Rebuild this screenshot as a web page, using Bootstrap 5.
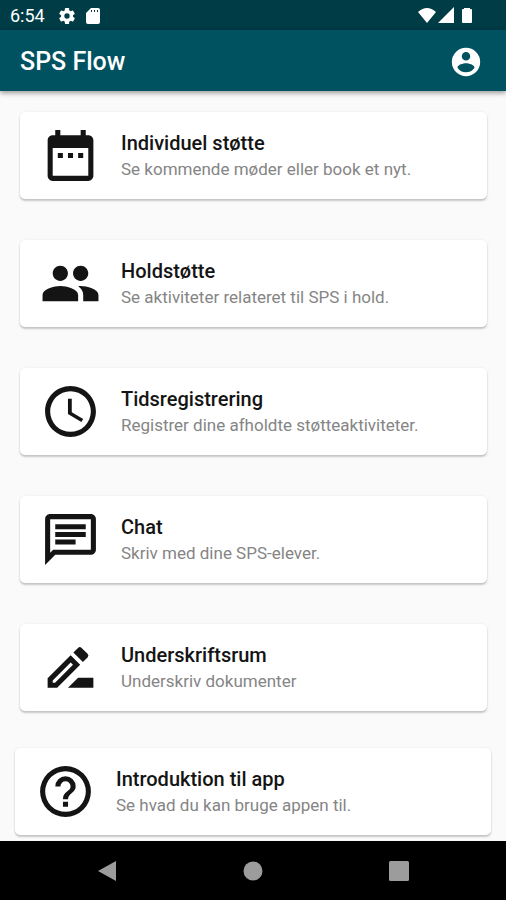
<!DOCTYPE html>
<html lang="da">
<head>
<meta charset="utf-8">
<meta name="viewport" content="width=device-width, initial-scale=1">
<title>SPS Flow</title>
<link href="https://cdn.jsdelivr.net/npm/bootstrap@5.3.0/dist/css/bootstrap.min.css" rel="stylesheet">
<style>
body { font-family: Roboto, "Liberation Sans", sans-serif; background: #fafafa; color: #141414; }
svg { display: block; fill: currentColor; flex: none; }
.status-bar { background: #003c46; height: 30px; padding: 2px 32px 0 10px; font-size: 18px; line-height: 28px; }
.app-bar { background: #005260; height: 61px; padding: 2px 20px 0; box-shadow: 0 2px 5px rgba(0,0,0,.4); }
.app-title { font-size: 25px; line-height: 32px; font-weight: 500; }
.menu-list { padding: 21px 19px 0 20px; gap: 41px; }
.menu-card { min-height: 87px; padding: 0 20px; gap: 20px; background: #fff; border-radius: 5px; box-shadow: 0 2px 2px rgba(0,0,0,.2), 0 0 3px rgba(0,0,0,.07); }
.menu-title { font-size: 20px; line-height: 26px; font-weight: 500; }
.menu-text { font-size: 17px; line-height: 26px; color: #858585; }
.intro-area { padding: 37px 15px 6px; }
.system-nav { background: #000; color: #9c9c9c; height: 59px; gap: 98px; }
.system-nav .btn { width: 48px; height: 48px; }
</style>
</head>
<body class="d-flex flex-column min-vh-100">
<header class="text-white">
  <div class="status-bar d-flex align-items-center">
    <span>6:54</span>
    <svg class="ms-2" width="28" height="20" viewBox="-2 0 28 24" aria-hidden="true"><path d="M19.14 12.94c.04-.3.06-.61.06-.94s-.02-.64-.07-.94l2.03-1.58a.49.49 0 0 0 .12-.61l-1.92-3.32a.49.49 0 0 0-.59-.22l-2.39.96a7 7 0 0 0-1.62-.94l-.36-2.54A.48.48 0 0 0 13.920 2.400h-3.840a.48.48 0 0 0-.47.41l-.36 2.540a7 7 0 0 0-1.620.940l-2.390-.960a.48.48 0 0 0-.59.22L2.740 8.870a.48.48 0 0 0 .12.610l2.030 1.580a7 7 0 0 0 0 1.880l-2.030 1.580a.49.49 0 0 0-.12.610l1.920 3.320c.12.22.37.29.59.22l2.390-.960c.5.38 1.030.7 1.620.94l.36 2.540c.05.24.24.41.48.41h3.840c.24 0 .44-.17.47-.41l.36-2.540a7 7 0 0 0 1.620-.94l2.390.96c.22.08.47 0 .59-.22l1.920-3.320a.48.48 0 0 0-.12-.610zM12 15.200A3.200 3.200 0 1 1 12 8.800a3.200 3.200 0 0 1 0 6.400z"/></svg>
    <svg width="26" height="20" viewBox="0 0 26 20" aria-hidden="true"><path fill-rule="evenodd" d="M10 2h7q2 0 2 2v12q0 2-2 2H7q-2 0-2-2V7zM10 4v2h1V4zm3 0v2h1V4zm3 0v2h1V4z"/></svg>
    <svg class="ms-auto" width="56" height="20" viewBox="0 0 56 20" aria-hidden="true"><path d="M0 6Q9-2 18 6L9 17zM20 17 36 1v16zM46 2h6v1h1q1 0 1 1v12q0 1-1 1h-8q-1 0-1-1V4q0-1 1-1h1z"/></svg>
  </div>
  <div class="app-bar d-flex align-items-center justify-content-between">
    <h1 class="app-title m-0">SPS Flow</h1>
    <button type="button" class="btn p-0 border-0 text-white" aria-label="Profil">
      <svg width="40" height="34" viewBox="0 0 24 24" aria-hidden="true"><path d="M12 2a10 10 0 1 0 0 20 10 10 0 0 0 0-20zm0 3a3 3 0 1 1 0 6 3 3 0 0 1 0-6zm0 14.200a7.200 7.200 0 0 1-6-3.220c.03-1.990 4-3.080 6-3.080s5.970 1.090 6 3.080a7.200 7.200 0 0 1-6 3.220z"/></svg>
    </button>
  </div>
</header>
<main class="flex-grow-1">
  <nav class="menu-list d-flex flex-column" aria-label="Menu">
    <a href="#individuel" class="menu-card d-flex align-items-center text-reset text-decoration-none">
      <svg width="61" height="61" viewBox="0 0 24 24" aria-hidden="true"><path d="M9 11H7v2h2v-2zm4 0h-2v2h2v-2zm4 0h-2v2h2v-2zm2-7h-1V2h-2v2H8V2H6v2H5c-1.110 0-1.990.9-1.990 2L3 20c0 1.100.89 2 2 2h14c1.100 0 2-.9 2-2V6c0-1.100-.9-2-2-2zm0 16H5V9h14v11z"/></svg>
      <span><span class="menu-title d-block">Individuel støtte</span><span class="menu-text d-block">Se kommende møder eller book et nyt.</span></span>
    </a>
    <a href="#hold" class="menu-card d-flex align-items-center text-reset text-decoration-none">
      <svg width="61" height="61" viewBox="0 0 24 24" aria-hidden="true"><path d="M16 11c1.660 0 2.990-1.340 2.990-3S17.660 5 16 5s-3 1.340-3 3 1.340 3 3 3zm-8 0c1.660 0 2.990-1.340 2.990-3S9.660 5 8 5 5 6.340 5 8s1.340 3 3 3zm0 2c-2.330 0-7 1.170-7 3.500V19h14v-2.500c0-2.330-4.670-3.500-7-3.500zm8 0c-.29 0-.62.02-.97.05 1.160.84 1.970 1.970 1.970 3.450V19h6v-2.500c0-2.330-4.670-3.500-7-3.500z"/></svg>
      <span><span class="menu-title d-block">Holdstøtte</span><span class="menu-text d-block">Se aktiviteter relateret til SPS i hold.</span></span>
    </a>
    <a href="#tid" class="menu-card d-flex align-items-center text-reset text-decoration-none">
      <svg width="61" height="61" viewBox="0 0 24 24" aria-hidden="true"><path d="M11.990 2C6.470 2 2 6.480 2 12s4.470 10 9.990 10C17.520 22 22 17.520 22 12S17.520 2 11.990 2zM12 20a8 8 0 1 1 0-16 8 8 0 0 1 0 16zm.5-13H11v6l5.250 3.150.75-1.230-4.500-2.670z"/></svg>
      <span><span class="menu-title d-block">Tidsregistrering</span><span class="menu-text d-block">Registrer dine afholdte støtteaktiviteter.</span></span>
    </a>
    <a href="#chat" class="menu-card d-flex align-items-center text-reset text-decoration-none">
      <svg width="61" height="61" viewBox="0 0 24 24" aria-hidden="true"><path d="M4 4h16v12H5.170L4 17.170V4m0-2c-1.100 0-1.990.9-1.990 2L2 22l4-4h14c1.100 0 2-.9 2-2V4c0-1.100-.9-2-2-2H4zm2 10h8v2H6v-2zm0-3h12v2H6V9zm0-3h12v2H6V6z"/></svg>
      <span><span class="menu-title d-block">Chat</span><span class="menu-text d-block">Skriv med dine SPS-elever.</span></span>
    </a>
    <a href="#underskrift" class="menu-card d-flex align-items-center text-reset text-decoration-none">
      <svg width="61" height="61" viewBox="0 0 24 24" aria-hidden="true"><path d="M15 16l-4 4h10v-4zM12.060 7.190L3 16.250V20h3.750l9.060-9.060zM5.920 18H5v-.92l7.060-7.060.92.92zM18.710 8.040a1 1 0 0 0 0-1.410l-2.340-2.340a1 1 0 0 0-1.410 0l-1.830 1.830 3.750 3.750z"/></svg>
      <span><span class="menu-title d-block">Underskriftsrum</span><span class="menu-text d-block">Underskriv dokumenter</span></span>
    </a>
  </nav>
  <div class="intro-area">
    <a href="#intro" class="menu-card d-flex align-items-center text-reset text-decoration-none">
      <svg width="61" height="61" viewBox="0 0 24 24" aria-hidden="true"><path d="M11 18h2v-2h-2v2zm1-16a10 10 0 1 0 0 20 10 10 0 0 0 0-20zm0 18a8 8 0 1 1 0-16 8 8 0 0 1 0 16zm0-14a4 4 0 0 0-4 4h2a2 2 0 1 1 4 0c0 2-3 1.750-3 5h2c0-2.250 3-2.500 3-5a4 4 0 0 0-4-4z"/></svg>
      <span><span class="menu-title d-block">Introduktion til app</span><span class="menu-text d-block">Se hvad du kan bruge appen til.</span></span>
    </a>
  </div>
</main>
<footer class="system-nav d-flex align-items-center justify-content-center">
  <button type="button" class="btn p-0 border-0 text-reset d-flex align-items-center justify-content-center" aria-label="Tilbage"><svg width="20" height="22" viewBox="0 0 20 22" aria-hidden="true"><path d="M1 11 19 1v20z"/></svg></button>
  <button type="button" class="btn p-0 border-0 text-reset d-flex align-items-center justify-content-center" aria-label="Hjem"><svg width="20" height="20" viewBox="0 0 20 20" aria-hidden="true"><circle cx="10" cy="10" r="9.500"/></svg></button>
  <button type="button" class="btn p-0 border-0 text-reset d-flex align-items-center justify-content-center" aria-label="Seneste apps"><svg width="20" height="20" viewBox="0 0 20 20" aria-hidden="true"><rect width="20" height="20" rx="1.500"/></svg></button>
</footer>
<script src="https://cdn.jsdelivr.net/npm/bootstrap@5.3.0/dist/js/bootstrap.bundle.min.js"></script>
</body>
</html>
